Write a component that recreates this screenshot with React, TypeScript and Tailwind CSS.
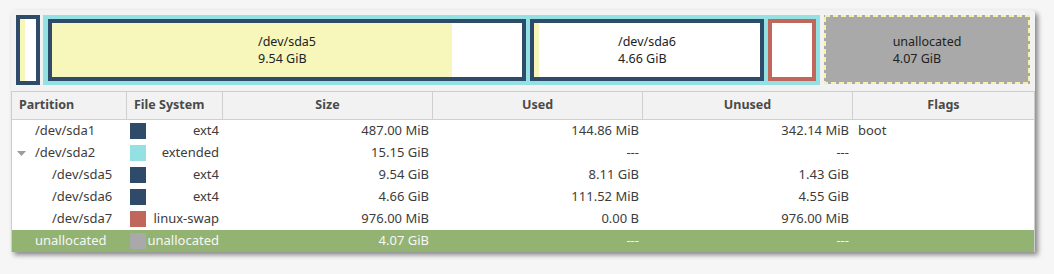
const rows = [
  { name: "/dev/sda1", indent: "pl-[23px]", color: "bg-[#2f4b6a]", fs: "ext4", size: "487.00 MiB", used: "144.86 MiB", unused: "342.14 MiB", flags: "boot" },
  { name: "/dev/sda2", indent: "pl-[23px]", color: "bg-[#94e1e3]", fs: "extended", size: "15.15 GiB", used: "---", unused: "---", flags: "", expander: true },
  { name: "/dev/sda5", indent: "pl-[40px]", color: "bg-[#2f4b6a]", fs: "ext4", size: "9.54 GiB", used: "8.11 GiB", unused: "1.43 GiB", flags: "" },
  { name: "/dev/sda6", indent: "pl-[40px]", color: "bg-[#2f4b6a]", fs: "ext4", size: "4.66 GiB", used: "111.52 MiB", unused: "4.55 GiB", flags: "" },
  { name: "/dev/sda7", indent: "pl-[40px]", color: "bg-[#c0665b]", fs: "linux-swap", size: "976.00 MiB", used: "0.00 B", unused: "976.00 MiB", flags: "" },
  { name: "unallocated", indent: "pl-[23px]", color: "bg-[#a9a9a9]", fs: "unallocated", size: "4.07 GiB", used: "---", unused: "---", flags: "", selected: true },
];

const cols = "grid grid-cols-[115px_96px_210px_210px_210px_1fr]";

export default function App() {
  return (
    <div
      className="w-[1054px] h-[274px] bg-[#f6f6f6] pt-[10px] pl-[11px] text-[#3c3c3c]"
      style={{ fontFamily: '"Noto Sans", "Open Sans", sans-serif' }}
    >
      <div className="w-[1024px] h-[242px] bg-[#f2f2f2] rounded-t-[4px] shadow-[3px_3px_5px_rgba(0,0,0,0.45)] flex flex-col">
        {/* Disk map */}
        <div className="flex items-start pt-[5px] pl-[5px] h-[81px]">
          <div className="w-[24px] h-[70px] border-4 border-[#2f4b6a] flex">
            <div className="w-[5px] bg-[#f7f7bb]" />
            <div className="flex-1 bg-white" />
          </div>
          <div className="ml-[3px] w-[777px] h-[70px] bg-[#94e1e3] flex items-center gap-[4px] pl-[5px]">
            <PartBox width="w-[478px]" fill="w-[400px]" name="/dev/sda5" size="9.54 GiB" />
            <PartBox width="w-[234px]" fill="w-[5px]" name="/dev/sda6" size="4.66 GiB" />
            <div className="w-[48px] h-[62px] border-4 border-[#c0665b] bg-white" />
          </div>
          <div className="ml-[4px] w-[206px] h-[69px] bg-[#a9a9a9] relative flex items-center justify-center">
            <svg className="absolute inset-0" width="206" height="69">
              <rect x="1" y="1" width="204" height="67" fill="none" stroke="#f5f2a4" strokeWidth="2" strokeDasharray="5 3" />
            </svg>
            <div className="relative text-[12.5px] leading-[17px] text-[#222]">
              <div>unallocated</div>
              <div>4.07 GiB</div>
            </div>
          </div>
        </div>

        {/* Partition table */}
        <div className="flex-1 bg-white border-x border-t border-[#cdcdcd] text-[13px]">
          <div className={`${cols} h-[28px] bg-[#f2f2f2] border-b border-[#d0d0d0] font-bold text-[#4a4a4a] text-[12.5px]`}>
            <div className="pl-[7px] flex items-center border-r border-[#d0d0d0]">Partition</div>
            <div className="pl-[7px] flex items-center border-r border-[#d0d0d0]">File System</div>
            <div className="flex items-center justify-center border-r border-[#d0d0d0]">Size</div>
            <div className="flex items-center justify-center border-r border-[#d0d0d0]">Used</div>
            <div className="flex items-center justify-center border-r border-[#d0d0d0]">Unused</div>
            <div className="flex items-center justify-center">Flags</div>
          </div>
          {rows.map((r) => (
            <div
              key={r.name}
              className={`${cols} h-[22px] items-center ${r.selected ? "bg-[#93b373] text-[#f7f7f7]" : ""}`}
            >
              <div className={`${r.indent} relative`}>
                {r.expander && (
                  <svg className="absolute left-[5px] top-[8px]" width="9" height="5" viewBox="0 0 9 5">
                    <path d="M0 0 L9 0 L4.5 5 Z" fill="#9c9c9c" />
                  </svg>
                )}
                {r.name}
              </div>
              <div className="flex items-center pl-[3px] pr-[4px]">
                <span className={`w-[16px] h-[16px] ${r.color} shrink-0`} />
                <span className="flex-1 text-right">{r.fs}</span>
              </div>
              <div className="text-right pr-[4px]">{r.size}</div>
              <div className="text-right pr-[4px]">{r.used}</div>
              <div className="text-right pr-[4px]">{r.unused}</div>
              <div className="pl-[5px]">{r.flags}</div>
            </div>
          ))}
        </div>
      </div>
    </div>
  );
}

function PartBox({ width, fill, name, size }: { width: string; fill: string; name: string; size: string }) {
  return (
    <div className={`${width} h-[62px] border-4 border-[#2f4b6a] bg-white relative flex items-center justify-center`}>
      <div className={`absolute left-0 top-0 bottom-0 ${fill} bg-[#f7f7bb]`} />
      <div className="relative text-[12.5px] leading-[17px] text-[#222]">
        <div>{name}</div>
        <div>{size}</div>
      </div>
    </div>
  );
}
